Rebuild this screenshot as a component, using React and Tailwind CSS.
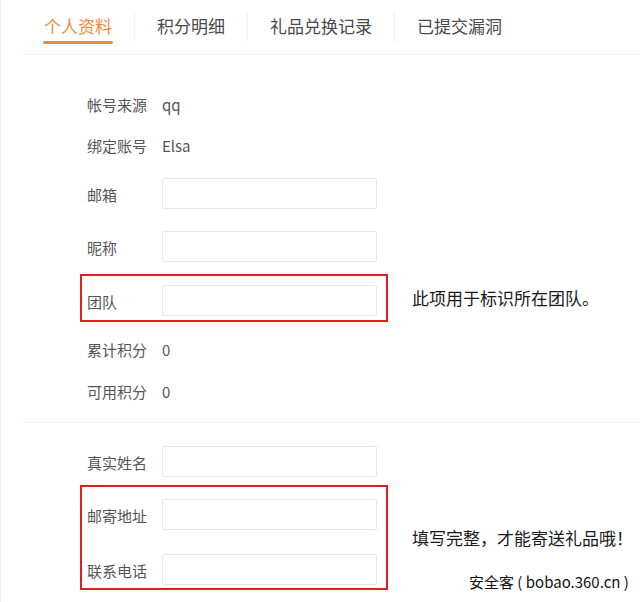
import React from 'react'

const TABS = ['个人资料', '积分明细', '礼品兑换记录', '已提交漏洞']

function Label({ children }) {
  return <div className="w-[75px] shrink-0 text-[15px] leading-[20px] text-[#555]">{children}</div>
}

function TextRow({ label, value, className = '' }) {
  return (
    <div className={`flex items-center px-[7px] h-[20px] ${className}`}>
      <Label>{label}</Label>
      <div className="text-[15px] leading-[20px] text-[#555]">{value}</div>
    </div>
  )
}

function InputRow({ label, className = '', pad = 'px-[7px]' }) {
  return (
    <div className={`flex items-center ${pad} ${className}`}>
      <div className="pt-[3px]">
        <Label>{label}</Label>
      </div>
      <div className="w-[215px] h-[31px] rounded-[2px] border border-[#e8e8e8] bg-white" />
    </div>
  )
}

function Note({ children }) {
  return <div className="ml-[24px] text-[17px] leading-[22px] text-[#1a1a1a] whitespace-nowrap">{children}</div>
}

export default function App() {
  return (
    <div
      className="relative w-[640px] h-[602px] overflow-hidden bg-white shadow-[inset_1px_0_0_#f0f0f0]"
      style={{ fontFamily: '"Noto Sans CJK SC", "Noto Sans", sans-serif' }}
    >
      <div className="flex pl-[22px]">
        {TABS.map((t, i) => (
          <React.Fragment key={t}>
            {i > 0 && <div className="w-px h-[30px] mt-[12px] bg-[#f2f2f2]" />}
            <div className="px-[22px] h-[54px] pt-[16px]">
              <div className={`text-[17px] leading-[20px] ${i === 0 ? 'text-[#ef8a3d]' : 'text-[#4a4a4a]'}`}>{t}</div>
              {i === 0 && <div className="mt-[5px] h-[3px] bg-[#ef8a3d] rounded-full -mx-px" />}
            </div>
          </React.Fragment>
        ))}
      </div>
      <div className="ml-[23px] h-px bg-[#f0f0f0]" />

      <div className="ml-[80px] pt-[40px]">
        <TextRow label="帐号来源" value="qq" />
        <TextRow label="绑定账号" value="Elsa" className="mt-[21px]" />
        <InputRow label="邮箱" className="mt-[22px]" />
        <InputRow label="昵称" className="mt-[22px]" />
        <div className="flex items-center mt-[12px]">
          <div className="w-[308px] border-2 border-[#e21f1f] pt-[9px] pb-[4px]">
            <InputRow label="团队" pad="px-[5px]" />
          </div>
          <Note>此项用于标识所在团队。</Note>
        </div>
        <TextRow label="累计积分" value="0" className="mt-[18px]" />
        <TextRow label="可用积分" value="0" className="mt-[22px]" />
      </div>

      <div className="ml-[23px] mt-[20px] h-px bg-[#f0f0f0]" />

      <div className="ml-[80px]">
        <InputRow label="真实姓名" className="mt-[23px]" />
        <div className="flex items-center mt-[8px]">
          <div className="w-[308px] border-2 border-[#e21f1f] pt-[12px] pb-[3px]">
            <InputRow label="邮寄地址" pad="px-[5px]" />
            <InputRow label="联系电话" pad="px-[5px]" className="mt-[24px]" />
          </div>
          <Note>填写完整，才能寄送礼品哦！</Note>
        </div>
      </div>

      <div
        className="absolute left-[469px] top-[572px] text-[15px] leading-[20px] text-[#111] whitespace-nowrap"
        style={{ textShadow: '0 0 2px #fff, 0 0 2px #fff' }}
      >
        安全客 ( bobao.360.cn )
      </div>
    </div>
  )
}
